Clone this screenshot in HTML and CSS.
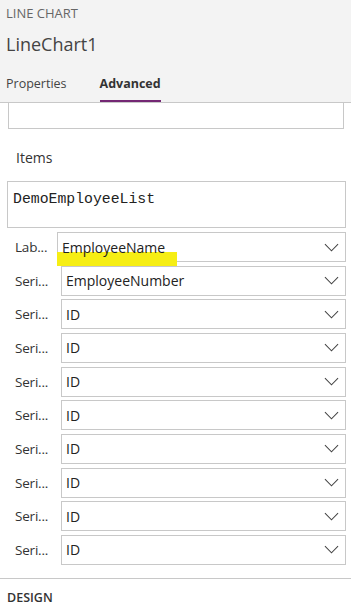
FILE: index.html
```html
<!DOCTYPE html>
<html lang="en">
<head>
    <meta charset="UTF-8">
    <meta name="viewport" content="width=device-width, initial-scale=1.0">
    <title>LineChart1 - Advanced</title>
    <link rel="stylesheet" href="styles.css">
</head>
<body>
    <header class="header">
        <div class="kind">LINE CHART</div>
        <div class="name">LineChart1</div>
        <nav class="tabs">
            <a href="#" class="tab">Properties</a>
            <a href="#" class="tab active">Advanced</a>
        </nav>
    </header>

    <main class="panel">
        <div class="prev-box"></div>

        <div class="field-title">Items</div>
        <div class="formula">DemoEmployeeList</div>

        <div class="rows">
            <div class="row">
                <span class="row-label">Lab...</span>
                <div class="select">
                    <span class="highlight"></span>
                    <span class="select-text">EmployeeName</span>
                    <svg class="chevron" viewBox="0 0 16 9"><path d="M1 1l7 7 7-7"/></svg>
                </div>
            </div>
            <div class="row">
                <span class="row-label wide">Seri...</span>
                <div class="select">
                    <span class="select-text">EmployeeNumber</span>
                    <svg class="chevron" viewBox="0 0 16 9"><path d="M1 1l7 7 7-7"/></svg>
                </div>
            </div>
            <div class="row">
                <span class="row-label wide">Seri...</span>
                <div class="select">
                    <span class="select-text">ID</span>
                    <svg class="chevron" viewBox="0 0 16 9"><path d="M1 1l7 7 7-7"/></svg>
                </div>
            </div>
            <div class="row">
                <span class="row-label wide">Seri...</span>
                <div class="select">
                    <span class="select-text">ID</span>
                    <svg class="chevron" viewBox="0 0 16 9"><path d="M1 1l7 7 7-7"/></svg>
                </div>
            </div>
            <div class="row">
                <span class="row-label wide">Seri...</span>
                <div class="select">
                    <span class="select-text">ID</span>
                    <svg class="chevron" viewBox="0 0 16 9"><path d="M1 1l7 7 7-7"/></svg>
                </div>
            </div>
            <div class="row">
                <span class="row-label wide">Seri...</span>
                <div class="select">
                    <span class="select-text">ID</span>
                    <svg class="chevron" viewBox="0 0 16 9"><path d="M1 1l7 7 7-7"/></svg>
                </div>
            </div>
            <div class="row">
                <span class="row-label wide">Seri...</span>
                <div class="select">
                    <span class="select-text">ID</span>
                    <svg class="chevron" viewBox="0 0 16 9"><path d="M1 1l7 7 7-7"/></svg>
                </div>
            </div>
            <div class="row">
                <span class="row-label wide">Seri...</span>
                <div class="select">
                    <span class="select-text">ID</span>
                    <svg class="chevron" viewBox="0 0 16 9"><path d="M1 1l7 7 7-7"/></svg>
                </div>
            </div>
            <div class="row">
                <span class="row-label wide">Seri...</span>
                <div class="select">
                    <span class="select-text">ID</span>
                    <svg class="chevron" viewBox="0 0 16 9"><path d="M1 1l7 7 7-7"/></svg>
                </div>
            </div>
            <div class="row">
                <span class="row-label wide">Seri...</span>
                <div class="select">
                    <span class="select-text">ID</span>
                    <svg class="chevron" viewBox="0 0 16 9"><path d="M1 1l7 7 7-7"/></svg>
                </div>
            </div>
        </div>

        <div class="section">DESIGN</div>
    </main>
</body>
</html>
```

FILE: styles.css
```css
body {
    font-family: 'Open Sans', 'Noto Sans', sans-serif;
    margin: 0;
    padding: 0;
    color: #333;
    background-color: #fff;
    overflow: hidden;
}
.header {
    background-color: #f3f3f3;
    border-bottom: 1px solid #c8c8c8;
    padding: 4px 0 0 0;
}
.kind {
    padding-left: 6px;
    font-size: 13px;
    line-height: 18px;
    color: #666;
}
.name {
    margin-top: 12px;
    padding-left: 6px;
    font-size: 18px;
    line-height: 20px;
    color: #444;
}
.tabs {
    display: flex;
    gap: 33px;
    padding-left: 6px;
    margin-top: 20px;
}
.tab {
    font-size: 12.5px;
    line-height: 20px;
    padding-bottom: 6px;
    border-bottom: 2px solid transparent;
    color: #444;
    text-decoration: none;
}
.tab.active {
    font-weight: 700;
    color: #333;
    border-bottom-color: #742774;
}
.panel {
    padding: 0 5px 0 7px;
}
.prev-box {
    margin: 0 2px 0 1px;
    height: 26px;
    box-sizing: border-box;
    border: 1px solid #c8c8c8;
    border-top: none;
}
.field-title {
    margin-top: 20px;
    padding-left: 9px;
    font-size: 14px;
    line-height: 18px;
}
.formula {
    margin-top: 14px;
    height: 47px;
    box-sizing: border-box;
    border: 1px solid #c8c8c8;
    padding: 6px 5px;
    font-family: 'Liberation Mono', monospace;
    font-size: 14.8px;
    line-height: 22px;
    color: #222;
}
.rows {
    display: flex;
    flex-direction: column;
    gap: 3.67px;
    margin-top: 4px;
}
.row {
    display: flex;
    align-items: center;
    padding-left: 8px;
}
.row-label {
    flex: 0 0 42px;
    font-size: 13.5px;
    letter-spacing: -0.2px;
    white-space: nowrap;
    color: #333;
}
.row-label.wide {
    flex-basis: 46px;
}
.select {
    position: relative;
    flex: 1;
    display: flex;
    align-items: center;
    height: 30px;
    box-sizing: border-box;
    border: 1px solid #c8c8c8;
    padding: 0 6px 0 4px;
}
.select-text {
    position: relative;
    z-index: 1;
    flex: 1;
    font-size: 14px;
    color: #222;
}
.chevron {
    width: 15px;
    height: 9px;
    fill: none;
    stroke: #444;
    stroke-width: 1.1;
}
.highlight {
    position: absolute;
    left: -1px;
    top: 19px;
    width: 120px;
    height: 14px;
    background-color: #f6ee14;
}
.section {
    margin: 13px -5px 0 -7px;
    border-top: 1px solid #c8c8c8;
    padding: 10px 0 0 7px;
    font-size: 12.5px;
    font-weight: 600;
    line-height: 18px;
    color: #333;
}
```
